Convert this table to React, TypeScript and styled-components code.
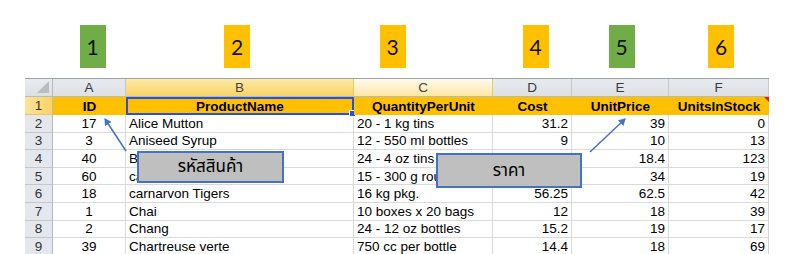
import styled, { createGlobalStyle } from 'styled-components'

const GlobalStyle = createGlobalStyle`
  html, body {
    margin: 0;
    padding: 0;
    background: #ffffff;
    overflow: hidden;
  }
`

// widths of: row header, A, B, C, D, E, F
const COLS = '28px 73px 228px 139px 79px 97px 100px'

const labels = [
  { text: '1', tone: 'green', shift: 3 },
  { text: '2', tone: 'gold', shift: -3 },
  { text: '3', tone: 'gold', shift: -31 },
  { text: '4', tone: 'gold', shift: 3 },
  { text: '5', tone: 'green', shift: 1 },
  { text: '6', tone: 'gold', shift: 2 },
]

const letters = ['A', 'B', 'C', 'D', 'E', 'F']

const header = ['ID', 'ProductName', 'QuantityPerUnit', 'Cost', 'UnitPrice', 'UnitsInStock']

const rows: string[][] = [
  ['17', 'Alice Mutton', '20 - 1 kg tins', '31.2', '39', '0'],
  ['3', 'Aniseed Syrup', '12 - 550 ml bottles', '9', '10', '13'],
  ['40', 'Boston Crab Meat', '24 - 4 oz tins', '14.72', '18.4', '123'],
  ['60', 'camembert Pierrot', '15 - 300 g rounds', '27.2', '34', '19'],
  ['18', 'carnarvon Tigers', '16 kg pkg.', '56.25', '62.5', '42'],
  ['1', 'Chai', '10 boxes x 20 bags', '12', '18', '39'],
  ['2', 'Chang', '24 - 12 oz bottles', '15.2', '19', '17'],
  ['39', 'Chartreuse verte', '750 cc per bottle', '14.4', '18', '69'],
]

const App = () => {
  return (
    <>
      <GlobalStyle />
      <Page>
        <LabelRow>
          <span />
          {labels.map((l) => (
            <LabelBox key={l.text} $tone={l.tone} $shift={l.shift}>
              {l.text}
            </LabelBox>
          ))}
        </LabelRow>

        <Sheet>
          <Corner>
            <svg width="14" height="14" viewBox="0 0 14 14">
              <polygon points="13,1 13,13 1,13" fill="#b9bcc2" />
            </svg>
          </Corner>
          {letters.map((c, i) => (
            <ColHead key={c} $state={i === 1 ? 'selected' : i === 2 ? 'hover' : 'normal'}>
              {c}
            </ColHead>
          ))}

          <RowHead $active>1</RowHead>
          {header.map((h, i) => (
            <HeadCell key={h} $selected={i === 1} $note={i === 5}>
              {h}
            </HeadCell>
          ))}

          {rows.map((r, ri) => (
            <Row key={ri} r={r} n={ri + 2} />
          ))}
        </Sheet>

        <Callout $left={137} $top={151} $w={147} $h={32}>
          รหัสสินค้า
        </Callout>
        <Callout $left={436} $top={153} $w={146} $h={35}>
          ราคา
        </Callout>

        <Arrows width="803" height="254" viewBox="0 0 803 254">
          <defs>
            <marker id="head" markerWidth="8" markerHeight="8" refX="6" refY="4" orient="auto" markerUnits="userSpaceOnUse">
              <path d="M0,0 L7,4 L0,8 Z" fill="#4472c4" />
            </marker>
          </defs>
          <line x1="126" y1="151" x2="105" y2="119" stroke="#4472c4" strokeWidth="1.5" markerEnd="url(#head)" />
          <line x1="590" y1="152" x2="625" y2="119" stroke="#4472c4" strokeWidth="1.5" markerEnd="url(#head)" />
        </Arrows>
      </Page>
    </>
  )
}

const Row = ({ r, n }: { r: string[]; n: number }) => (
  <>
    <RowHead>{n}</RowHead>
    <Cell $align="center">{r[0]}</Cell>
    <Cell>{r[1]}</Cell>
    <Cell>{r[2]}</Cell>
    <Cell $align="right">{r[3]}</Cell>
    <Cell $align="right">{r[4]}</Cell>
    <Cell $align="right">{r[5]}</Cell>
  </>
)

const Page = styled.div`
  position: relative;
  width: 803px;
  height: 254px;
  padding: 25px 0 0 25px;
  box-sizing: border-box;
  overflow: hidden;
`

const LabelRow = styled.div`
  display: grid;
  grid-template-columns: ${COLS};
  height: 43px;
  margin-bottom: 10px;
`

const LabelBox = styled.div<{ $tone: string; $shift: number }>`
  justify-self: center;
  width: 26px;
  height: 43px;
  margin-left: ${(p) => p.$shift * 2}px;
  background: ${(p) => (p.$tone === 'green' ? '#70ad47' : '#ffc000')};
  display: flex;
  align-items: center;
  justify-content: center;
  font-family: Lato, 'Open Sans', sans-serif;
  font-size: 21px;
  color: #111;
`

const Sheet = styled.div`
  display: grid;
  grid-template-columns: ${COLS};
  grid-template-rows: 18px 18px;
  grid-auto-rows: 17.6px;
  width: 744px;
  font-family: 'Liberation Sans', Arial, sans-serif;
  font-size: 13.5px;
  color: #000;
  border-top: 1px solid #9ea3ab;
`

const Corner = styled.div`
  background: linear-gradient(#e9ecf0, #dcdfe4);
  border-right: 1px solid #b5b9c0;
  border-bottom: 1px solid #b5b9c0;
  display: flex;
  align-items: flex-end;
  justify-content: flex-end;
  padding: 0 2px 2px 0;
`

const ColHead = styled.div<{ $state: string }>`
  display: flex;
  align-items: center;
  justify-content: center;
  font-size: 13.5px;
  color: ${(p) => (p.$state === 'normal' ? '#3a3a3a' : '#444')};
  border-right: 1px solid ${(p) => (p.$state === 'normal' ? '#c4c8ce' : '#e6c86a')};
  border-bottom: 1px solid #b5b9c0;
  background: ${(p) =>
    p.$state === 'selected'
      ? 'linear-gradient(#fdeaa8, #f9d464)'
      : p.$state === 'hover'
        ? 'linear-gradient(#fffaf0, #fde7a4)'
        : 'linear-gradient(#e7eaee, #dde0e5)'};
`

const RowHead = styled.div<{ $active?: boolean }>`
  display: flex;
  align-items: center;
  justify-content: center;
  font-size: 13.5px;
  color: #333;
  background: ${(p) => (p.$active ? 'linear-gradient(90deg, #fde29a, #f9d464)' : '#e4e7ec')};
  border-right: 1px solid #b5b9c0;
  border-bottom: 1px solid ${(p) => (p.$active ? '#e6c86a' : '#c4c8ce')};
  box-sizing: border-box;
`

const HeadCell = styled.div<{ $selected?: boolean; $note?: boolean }>`
  position: relative;
  display: flex;
  align-items: center;
  justify-content: center;
  font-weight: bold;
  background: #ffc000;
  box-sizing: border-box;
  border: 2px solid ${(p) => (p.$selected ? '#2a4fd8' : 'transparent')};
  border-width: ${(p) => (p.$selected ? '2px' : '0')};
  white-space: nowrap;

  &::after {
    content: '';
    position: absolute;
    display: ${(p) => (p.$selected ? 'block' : 'none')};
    right: -4px;
    bottom: -4px;
    width: 5px;
    height: 5px;
    background: #2a4fd8;
    border: 1px solid #fff;
  }

  &::before {
    content: '';
    position: absolute;
    display: ${(p) => (p.$note ? 'block' : 'none')};
    top: 0;
    right: 0;
    border-top: 5px solid #e0201c;
    border-left: 5px solid transparent;
  }
`

const Cell = styled.div<{ $align?: 'left' | 'center' | 'right' }>`
  display: flex;
  align-items: center;
  justify-content: ${(p) =>
    p.$align === 'center' ? 'center' : p.$align === 'right' ? 'flex-end' : 'flex-start'};
  padding: 0 3px;
  border-right: 1px solid #d9d9d9;
  border-bottom: 1px solid #d9d9d9;
  white-space: nowrap;
  overflow: hidden;
  box-sizing: border-box;
  background: #fff;
`

const Callout = styled.div<{ $left: number; $top: number; $w: number; $h: number }>`
  position: absolute;
  left: ${(p) => p.$left}px;
  top: ${(p) => p.$top}px;
  width: ${(p) => p.$w}px;
  height: ${(p) => p.$h}px;
  box-sizing: border-box;
  background: #bfbfbf;
  border: 2px solid #4472c4;
  display: flex;
  align-items: center;
  justify-content: center;
  font-family: 'Noto Sans', 'Noto Sans Thai', 'DejaVu Sans', sans-serif;
  font-size: 17px;
  color: #000;
`

const Arrows = styled.svg`
  position: absolute;
  left: 0;
  top: 0;
  pointer-events: none;
`

export default App
